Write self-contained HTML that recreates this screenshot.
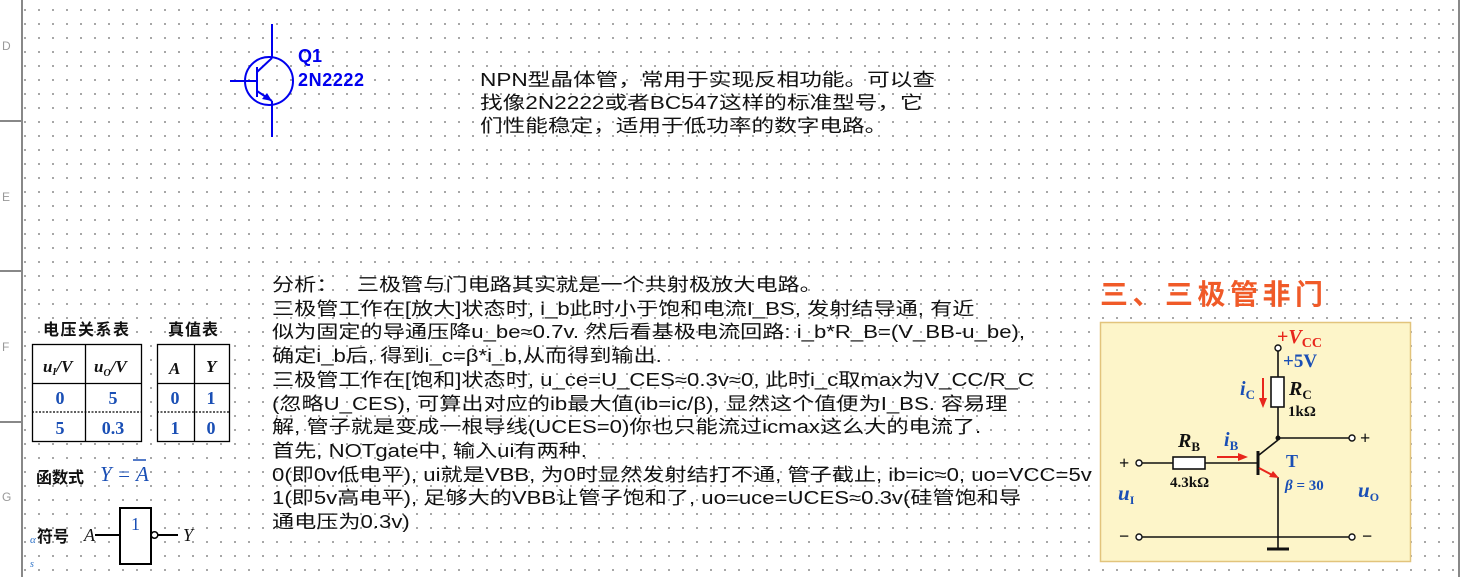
<!DOCTYPE html>
<html><head><meta charset="utf-8"><style>
*{margin:0;padding:0}
body{width:1460px;height:577px;position:relative;overflow:hidden;background:#fff;font-family:"Liberation Sans","Noto Sans CJK SC",sans-serif}
.grid{position:absolute;left:0;top:0;width:1460px;height:577px;background-image:radial-gradient(circle,#8a8a8a 0.8px,transparent 1px);background-size:14px 14px;background-position:4px 3px}
.t{position:absolute;white-space:nowrap;color:#111;transform-origin:0 0}
.m{font-size:18px;line-height:22px;left:272px;transform:scaleX(1.23)}
.u{font-size:18px;line-height:23px;left:480px;transform:scaleX(1.257)}
.lbl{position:absolute;color:#999;font-size:12px;left:2px}
.b{font-weight:bold}
</style></head><body>
<div class="grid"></div>
<div style="position:absolute;left:0;top:0;width:22px;height:577px;background:#fff"></div>
<div style="position:absolute;left:21px;top:0;width:2px;height:577px;background:#888"></div>
<div style="position:absolute;left:0;top:120px;width:22px;height:2px;background:#888"></div>
<div style="position:absolute;left:0;top:270px;width:22px;height:2px;background:#888"></div>
<div style="position:absolute;left:0;top:421px;width:22px;height:2px;background:#888"></div>
<div class="lbl" style="top:39px">D</div><div class="lbl" style="top:190px">E</div><div class="lbl" style="top:340px">F</div><div class="lbl" style="top:490px">G</div>
<div style="position:absolute;right:0;top:0;width:2px;height:577px;background:#888"></div>

<svg style="position:absolute;left:0;top:0" width="1460" height="577">
<g stroke="#0000ee" stroke-width="2" fill="none">
<circle cx="269" cy="81" r="24"/>
<line x1="230" y1="81" x2="257" y2="81"/>
<line x1="257" y1="67" x2="257" y2="97"/>
<line x1="257" y1="72" x2="272" y2="58"/>
<line x1="272" y1="58" x2="272" y2="24"/>
<line x1="257" y1="91" x2="272" y2="101"/>
<line x1="272" y1="101" x2="272" y2="137"/>
</g>
<polygon points="272,101 262,99 267,93" fill="#0000ee"/>
<text x="298" y="62" fill="#0000ee" font-family="Liberation Sans" font-weight="bold" font-size="18">Q1</text>
<text x="298" y="86" fill="#0000ee" font-family="Liberation Sans" font-weight="bold" font-size="18" letter-spacing="0.6">2N2222</text>

<g stroke="#000" stroke-width="1.3" fill="#fff">
<rect x="32.5" y="344.5" width="109" height="97"/>
<line x1="85.5" y1="344" x2="85.5" y2="441"/>
<line x1="32" y1="383.5" x2="141" y2="383.5"/>
<rect x="157.5" y="344.5" width="72" height="97"/>
<line x1="194.5" y1="344" x2="194.5" y2="441"/>
<line x1="157" y1="383.5" x2="229" y2="383.5"/>
<line x1="32" y1="412" x2="141" y2="412" stroke-dasharray="2,1.5"/>
<line x1="157" y1="412" x2="229" y2="412" stroke-dasharray="2,1.5"/>
</g>
<g font-family="Liberation Serif" font-style="italic" font-size="17" fill="#111" font-weight="bold">
<text x="43" y="372">u<tspan font-size="10" dy="3">I</tspan><tspan dy="-3">/V</tspan></text>
<text x="94" y="372">u<tspan font-size="10" dy="4">O</tspan><tspan dy="-4">/V</tspan></text>
<text x="169" y="374">A</text><text x="206" y="372">Y</text>
</g>
<g font-family="Liberation Serif" font-weight="bold" font-size="18" fill="#1a4fb5" text-anchor="middle">
<text x="60" y="404">0</text><text x="113" y="404">5</text>
<text x="60" y="434">5</text><text x="113" y="434">0.3</text>
<text x="175" y="404">0</text><text x="211" y="404">1</text>
<text x="175" y="434">1</text><text x="211" y="434">0</text>
</g>
<text x="100" y="481" font-family="Liberation Serif" font-style="italic" font-size="21" fill="#1a4fb5">Y = A</text>
<line x1="133" y1="460" x2="146" y2="460" stroke="#1a4fb5" stroke-width="1.5"/>

<g stroke="#000" stroke-width="2" fill="#fff">
<rect x="120" y="508" width="31" height="56"/>
<line x1="95" y1="535" x2="120" y2="535"/>
<circle cx="154.5" cy="535" r="3.3" stroke-width="1.5"/>
<line x1="158" y1="535" x2="178" y2="535"/>
</g>
<text x="131" y="530" font-family="Liberation Serif" font-size="18" fill="#1a4fb5">1</text>
<text x="84" y="541" font-family="Liberation Serif" font-style="italic" font-size="18" fill="#111">A</text>
<text x="183" y="541" font-family="Liberation Serif" font-style="italic" font-size="18" fill="#111">Y</text>
<text x="30" y="543" font-family="Liberation Serif" font-style="italic" font-size="11" fill="#2a6fc5">α</text>
<text x="30" y="567" font-family="Liberation Serif" font-style="italic" font-size="10" fill="#2a6fc5">s</text>

<rect x="1100.5" y="322.5" width="310" height="239" fill="#fdf5c9" stroke="#e2c47c" stroke-width="1.5"/>
<g stroke="#111" stroke-width="1.6" fill="none">
<line x1="1278" y1="351" x2="1278" y2="377"/>
<rect x="1271" y="377" width="13" height="30" fill="#fff"/>
<line x1="1278" y1="407" x2="1278" y2="438"/>
<line x1="1278" y1="438" x2="1349" y2="438"/>
<line x1="1142" y1="463" x2="1173" y2="463"/>
<rect x="1173" y="457" width="32" height="12" fill="#fff"/>
<line x1="1205" y1="463" x2="1258" y2="463"/>
<line x1="1258" y1="451" x2="1258" y2="475" stroke-width="3"/>
<line x1="1259" y1="455" x2="1278" y2="440"/>
<line x1="1278" y1="477" x2="1278" y2="537"/>
<line x1="1142" y1="537" x2="1349" y2="537"/>
<line x1="1278" y1="537" x2="1278" y2="548"/>
<line x1="1267" y1="549" x2="1289" y2="549" stroke-width="3"/>
</g>
<g stroke="#111" stroke-width="1.4" fill="#fff">
<circle cx="1278" cy="348" r="3"/><circle cx="1352" cy="438" r="3"/>
<circle cx="1139" cy="463" r="3"/><circle cx="1139" cy="537" r="3"/><circle cx="1352" cy="537" r="3"/>
</g>
<circle cx="1278" cy="438" r="2.5" fill="#111"/>
<g stroke="#e8261c" stroke-width="2" fill="#e8261c">
<line x1="1259" y1="468" x2="1274" y2="476"/>
<polygon points="1279,478 1269,477 1273,471" stroke="none"/>
<line x1="1263" y1="378" x2="1263" y2="400"/>
<polygon points="1263,408 1259,398 1267,398" stroke="none"/>
<line x1="1217" y1="457" x2="1240" y2="457"/>
<polygon points="1248,457 1238,453 1238,461" stroke="none"/>
</g>
<g font-family="Liberation Serif" font-weight="bold">
<text x="1277" y="343" fill="#e8261c" font-size="20">+<tspan font-style="italic">V</tspan><tspan font-size="14" dy="4">CC</tspan></text>
<text x="1283" y="367" fill="#1a4fb5" font-size="19">+5V</text>
<text x="1240" y="395" fill="#1a4fb5" font-size="20" font-style="italic">i<tspan font-size="13" dy="4" font-style="normal">C</tspan></text>
<text x="1289" y="395" fill="#111" font-size="20" font-style="italic">R<tspan font-size="13" dy="4" font-style="normal">C</tspan></text>
<text x="1288" y="416" fill="#111" font-size="15">1kΩ</text>
<text x="1178" y="447" fill="#111" font-size="20" font-style="italic">R<tspan font-size="13" dy="4" font-style="normal">B</tspan></text>
<text x="1170" y="487" fill="#111" font-size="15">4.3kΩ</text>
<text x="1224" y="446" fill="#1a4fb5" font-size="20" font-style="italic">i<tspan font-size="13" dy="4" font-style="normal">B</tspan></text>
<text x="1286" y="467" fill="#1a4fb5" font-size="18">T</text>
<text x="1285" y="490" fill="#1a4fb5" font-size="15"><tspan font-style="italic">β</tspan> = 30</text>
<text x="1118" y="500" fill="#1a4fb5" font-size="21" font-style="italic">u<tspan font-size="12" dy="4" font-style="normal">I</tspan></text>
<text x="1358" y="497" fill="#1a4fb5" font-size="21" font-style="italic">u<tspan font-size="12" dy="4" font-style="normal">O</tspan></text>
<text x="1119" y="469" fill="#111" font-size="18">+</text>
<text x="1360" y="444" fill="#111" font-size="18">+</text>
<text x="1119" y="542" fill="#111" font-size="18">−</text>
<text x="1362" y="542" fill="#111" font-size="18">−</text>
</g>
</svg>

<div class="t b" style="left:1100px;top:273px;font-size:28px;color:#f05a28;letter-spacing:4.5px">三、三极管非门</div>
<div class="t b" style="left:43px;top:316px;font-size:16px;letter-spacing:1.5px">电压关系表</div>
<div class="t b" style="left:168px;top:316px;font-size:16px;letter-spacing:1px">真值表</div>
<div class="t b" style="left:36px;top:464px;font-size:16px">函数式</div>
<div class="t b" style="left:37px;top:523px;font-size:16px">符号</div>

<div class="t u" style="top:69px">NPN型晶体管，常用于实现反相功能。可以查</div>
<div class="t u" style="top:92px">找像2N2222或者BC547这样的标准型号，它</div>
<div class="t u" style="top:115px">们性能稳定，适用于低功率的数字电路。</div>

<div class="t m" style="top:274px">分析：&nbsp;&nbsp;&nbsp;三极管与门电路其实就是一个共射极放大电路。</div>
<div class="t m" style="top:298px">三极管工作在[放大]状态时, i_b此时小于饱和电流I_BS, 发射结导通, 有近</div>
<div class="t m" style="top:321px">似为固定的导通压降u_be≈0.7v. 然后看基极电流回路: i_b*R_B=(V_BB-u_be),</div>
<div class="t m" style="top:345px">确定i_b后, 得到i_c=β*i_b,从而得到输出.</div>
<div class="t m" style="top:369px">三极管工作在[饱和]状态时, u_ce=U_CES≈0.3v≈0, 此时i_c取max为V_CC/R_C</div>
<div class="t m" style="top:393px">(忽略U_CES), 可算出对应的ib最大值(ib=ic/β), 显然这个值便为I_BS. 容易理</div>
<div class="t m" style="top:416px">解, 管子就是变成一根导线(UCES=0)你也只能流过icmax这么大的电流了.</div>
<div class="t m" style="top:440px">首先, NOTgate中, 输入ui有两种.</div>
<div class="t m" style="top:464px">0(即0v低电平), ui就是VBB, 为0时显然发射结打不通, 管子截止, ib=ic≈0, uo=VCC=5v</div>
<div class="t m" style="top:487px">1(即5v高电平), 足够大的VBB让管子饱和了, uo=uce=UCES≈0.3v(硅管饱和导</div>
<div class="t m" style="top:511px">通电压为0.3v)</div>
</body></html>
